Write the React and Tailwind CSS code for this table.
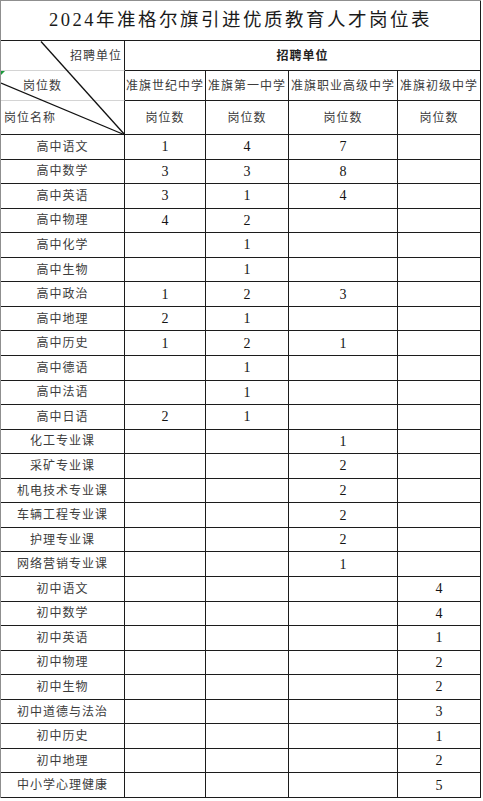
import React from 'react';

const schools = ['准旗世纪中学', '准旗第一中学', '准旗职业高级中学', '准旗初级中学'];

// 岗位名称 + 各校岗位数（空字符串表示无）
const rows = [
  ['高中语文', '1', '4', '7', ''],
  ['高中数学', '3', '3', '8', ''],
  ['高中英语', '3', '1', '4', ''],
  ['高中物理', '4', '2', '', ''],
  ['高中化学', '', '1', '', ''],
  ['高中生物', '', '1', '', ''],
  ['高中政治', '1', '2', '3', ''],
  ['高中地理', '2', '1', '', ''],
  ['高中历史', '1', '2', '1', ''],
  ['高中德语', '', '1', '', ''],
  ['高中法语', '', '1', '', ''],
  ['高中日语', '2', '1', '', ''],
  ['化工专业课', '', '', '1', ''],
  ['采矿专业课', '', '', '2', ''],
  ['机电技术专业课', '', '', '2', ''],
  ['车辆工程专业课', '', '', '2', ''],
  ['护理专业课', '', '', '2', ''],
  ['网络营销专业课', '', '', '1', ''],
  ['初中语文', '', '', '', '4'],
  ['初中数学', '', '', '', '4'],
  ['初中英语', '', '', '', '1'],
  ['初中物理', '', '', '', '2'],
  ['初中生物', '', '', '', '2'],
  ['初中道德与法治', '', '', '', '3'],
  ['初中历史', '', '', '', '1'],
  ['初中地理', '', '', '', '2'],
  ['中小学心理健康', '', '', '', '5'],
];

const cols = 'grid grid-cols-[124px_81px_83px_109px_83px]';
const cell = 'border-r border-b border-[#1c1c1c] flex items-center justify-center';

export default function App() {
  return (
    <div
      className="w-[483px] h-[801px] bg-white text-[#3c3c3c]"
      style={{ fontFamily: '"Liberation Serif", "Noto Sans CJK SC", serif' }}
    >
      <div className="relative w-[481px] border-l border-t border-[#8f8f8f]">
        {/* 标题 */}
        <div className="h-[40px] border-r border-b border-r-[#1c1c1c] border-b-[#1c1c1c] flex items-center justify-center text-[18.5px] tracking-[2.5px] text-[#1a1a1a]">
          2024年准格尔旗引进优质教育人才岗位表
        </div>

        {/* 表头 */}
        <div className={`${cols} grid-rows-[30px_30px_34px] text-[12px] tracking-[1px]`}>
          <div className="border-r border-b border-r-[#1c1c1c] border-b-[#d4d4d4] flex items-center justify-end pr-[2px]">
            招聘单位
          </div>
          <div className={`${cell} col-span-4 font-bold text-[#222]`}>招聘单位</div>

          <div className="border-r border-b border-r-[#1c1c1c] border-b-[#d4d4d4] flex items-center pl-[22px]">
            岗位数
          </div>
          {schools.map((s) => (
            <div key={s} className={`${cell} whitespace-nowrap`}>{s}</div>
          ))}

          <div className="border-r border-b border-[#1c1c1c] flex items-center pl-[3px]">岗位名称</div>
          {schools.map((s) => (
            <div key={s} className={cell}>岗位数</div>
          ))}
        </div>

        {/* 数据 */}
        <div className="grid grid-rows-[repeat(27,minmax(0,1fr))] h-[663px]">
          {rows.map(([name, ...nums]) => (
            <div key={name} className={cols}>
              <div className={`${cell} text-[12px] tracking-[1px]`}>{name}</div>
              {nums.map((n, i) => (
                <div key={i} className={`${cell} text-[14px] text-[#141414]`}>{n}</div>
              ))}
            </div>
          ))}
        </div>

        {/* 斜线表头 */}
        <svg className="absolute left-0 top-[40px]" width="126" height="96" viewBox="0 0 126 96">
          <line x1="40" y1="0.5" x2="124" y2="94" stroke="#111" strokeWidth="1.3" />
          <line x1="0" y1="42" x2="124" y2="94" stroke="#111" strokeWidth="1.3" />
        </svg>
        <div className="absolute left-0 top-[70px] w-0 h-0 border-t-[4px] border-r-[4px] border-t-[#1a9a3a] border-r-transparent" />
      </div>
    </div>
  );
}
